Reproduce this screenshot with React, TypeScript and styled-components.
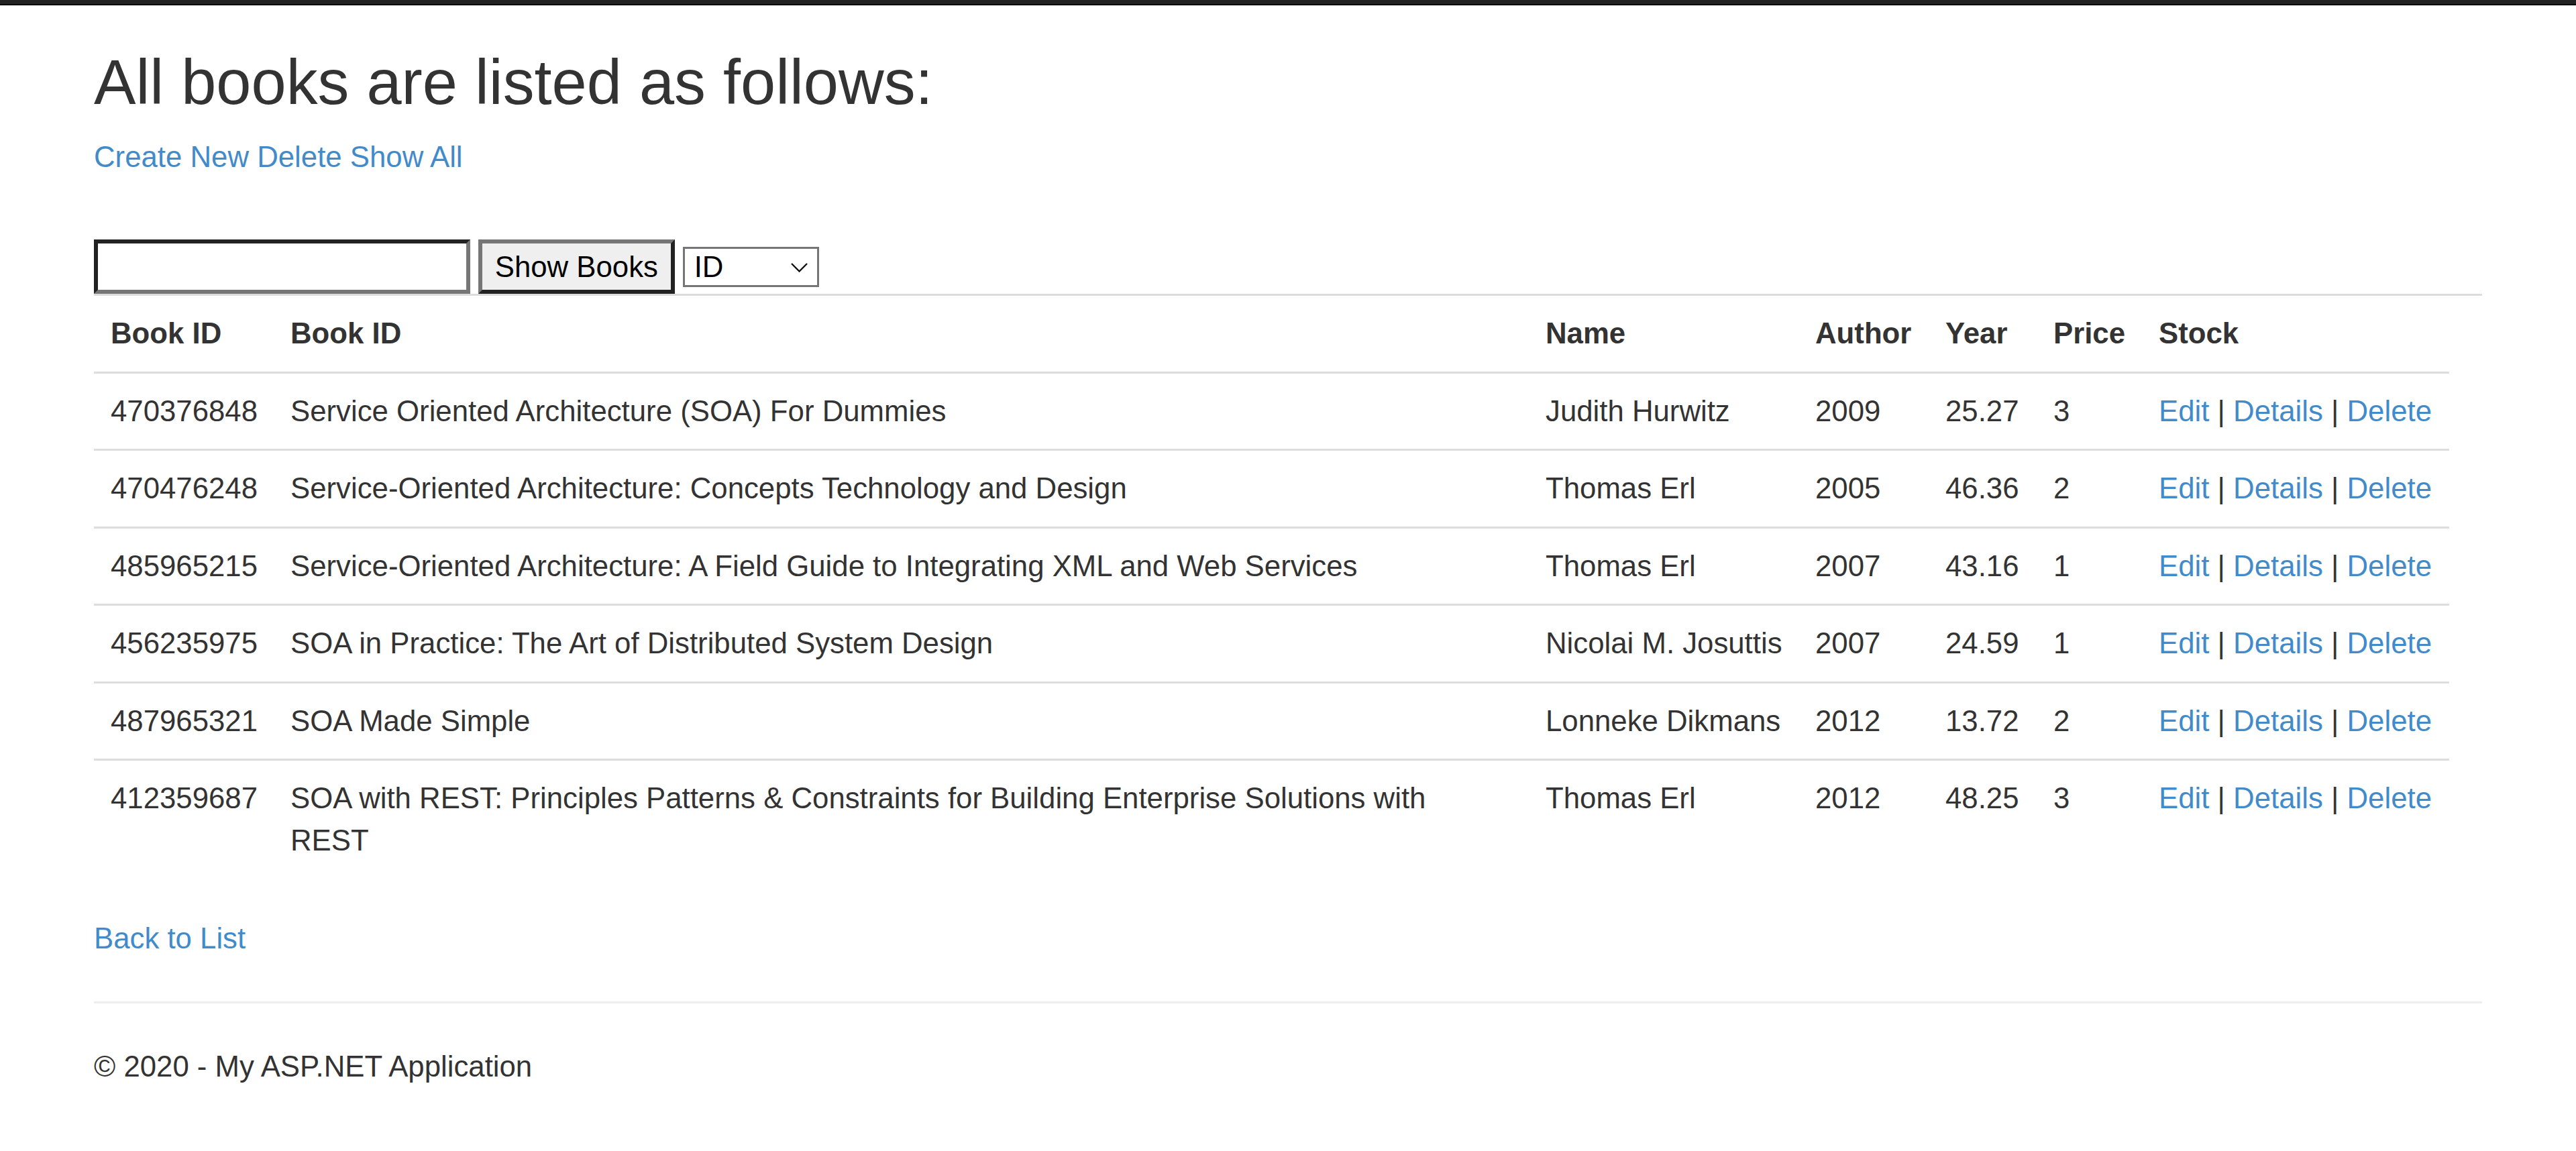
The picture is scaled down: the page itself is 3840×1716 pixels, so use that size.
import styled, { createGlobalStyle } from "styled-components";

// page was captured at 3.125x, so every bootstrap px value goes through u()
const u = (n: number) => `${n * 3.125}px`;

const GlobalStyle = createGlobalStyle`
  html, body {
    margin: 0;
    padding: 0;
    background: #fff;
  }
  body {
    font-family: "Liberation Sans", Arial, Helvetica, sans-serif;
    font-size: ${u(14)};
    line-height: ${u(20)};
    color: #333;
  }
  * {
    box-sizing: border-box;
  }
`;

const TopBar = styled.div`
  height: 8px;
  background: #222;
  border-bottom: 2px solid #080808;
`;

const Container = styled.div`
  padding: 0 140px;
`;

const Title = styled.h2`
  margin: ${u(20)} 0 29px;
  font-size: ${u(30)};
  line-height: 1.1;
  font-weight: 400;
  color: #333;
`;

const Actions = styled.p`
  margin: 0 0 92px;
  white-space: nowrap;
`;

const Link = styled.a`
  color: #428bca;
  text-decoration: none;
  cursor: pointer;
`;

const SearchForm = styled.form`
  display: flex;
  align-items: center;
  gap: 12px;
  height: ${u(26)};
`;

const SearchInput = styled.input`
  width: 561px;
  height: ${u(26)};
  padding: ${u(1)} ${u(2)};
  border-style: solid;
  border-width: ${u(2)};
  border-color: #222 #767676 #767676 #222;
  background: #fff;
  font: inherit;
  color: #000;
  outline: none;
`;

const SubmitButton = styled.button`
  height: ${u(26)};
  padding: ${u(1)} ${u(6)};
  border-style: solid;
  border-width: ${u(2)};
  border-color: #767676 #222 #222 #767676;
  background: #efefef;
  font: inherit;
  color: #000;
  white-space: nowrap;
`;

const SelectWrap = styled.div`
  position: relative;
  display: flex;
`;

const Select = styled.select`
  appearance: none;
  width: 203px;
  height: 60px;
  padding: 0 0 0 14px;
  border: ${u(1)} solid #767676;
  border-radius: 0;
  background: #fff;
  font-family: inherit;
  font-size: ${u(14)};
  line-height: 54px;
  color: #000;
  outline: none;
`;

const Chevron = styled.svg`
  position: absolute;
  right: 17px;
  top: 24px;
  width: 25px;
  height: 14px;
  pointer-events: none;
`;

const BooksTable = styled.table`
  width: 100%;
  table-layout: fixed;
  border-collapse: collapse;
  border-spacing: 0;
  margin-bottom: 59px;
`;

const HeadCell = styled.th`
  padding: ${u(8)};
  border-top: ${u(1)} solid #ddd;
  text-align: left;
  vertical-align: top;
  font-weight: 700;
  white-space: nowrap;
`;

const Cell = styled.td<{ $wrap?: boolean }>`
  padding: ${u(8)};
  padding-right: ${(p) => (p.$wrap ? "40px" : u(8))};
  border-top: ${u(1)} solid #ddd;
  text-align: left;
  vertical-align: top;
  white-space: ${(p) => (p.$wrap ? "normal" : "nowrap")};
`;

const BackLine = styled.p`
  margin: 0;
`;

const Rule = styled.hr`
  margin: ${u(20)} 0;
  border: 0;
  border-top: ${u(1)} solid #eee;
`;

const Footer = styled.footer`
  p {
    margin: 0 0 ${u(10)};
  }
`;

type Book = {
  id: string;
  title: string;
  author: string;
  year: number;
  price: string;
  stock: number;
};

const books: Book[] = [
  { id: "470376848", title: "Service Oriented Architecture (SOA) For Dummies", author: "Judith Hurwitz", year: 2009, price: "25.27", stock: 3 },
  { id: "470476248", title: "Service-Oriented Architecture: Concepts Technology and Design", author: "Thomas Erl", year: 2005, price: "46.36", stock: 2 },
  { id: "485965215", title: "Service-Oriented Architecture: A Field Guide to Integrating XML and Web Services", author: "Thomas Erl", year: 2007, price: "43.16", stock: 1 },
  { id: "456235975", title: "SOA in Practice: The Art of Distributed System Design", author: "Nicolai M. Josuttis", year: 2007, price: "24.59", stock: 1 },
  { id: "487965321", title: "SOA Made Simple", author: "Lonneke Dikmans", year: 2012, price: "13.72", stock: 2 },
  { id: "412359687", title: "SOA with REST: Principles Patterns & Constraints for Building Enterprise Solutions with REST", author: "Thomas Erl", year: 2012, price: "48.25", stock: 3 },
];

const headers = ["Book ID", "Book ID", "Name", "Author", "Year", "Price", "Stock", ""];

function App() {
  return (
    <>
      <GlobalStyle />
      <TopBar />
      <Container>
        <Title>All books are listed as follows:</Title>
        <Actions>
          <Link>Create New</Link> <Link>Delete</Link> <Link>Show All</Link>
        </Actions>

        <SearchForm onSubmit={(e) => e.preventDefault()}>
          <SearchInput type="text" />
          <SubmitButton type="submit">Show Books</SubmitButton>
          <SelectWrap>
            <Select defaultValue="ID">
              <option value="ID">ID</option>
              <option value="Name">Name</option>
              <option value="Author">Author</option>
            </Select>
            <Chevron viewBox="0 0 25 14">
              <polyline points="1,1 12.5,12.5 24,1" fill="none" stroke="#111" strokeWidth="2.4" />
            </Chevron>
          </SelectWrap>
        </SearchForm>

        <BooksTable>
          <colgroup>
            <col style={{ width: 268 }} />
            <col />
            <col style={{ width: 402 }} />
            <col style={{ width: 194 }} />
            <col style={{ width: 161 }} />
            <col style={{ width: 157 }} />
            <col style={{ width: 458 }} />
            <col style={{ width: 49 }} />
          </colgroup>
          <tbody>
            <tr>
              {headers.map((h, i) => (
                <HeadCell key={i}>{h}</HeadCell>
              ))}
            </tr>
            {books.map((b) => (
              <tr key={b.id}>
                <Cell>{b.id}</Cell>
                <Cell $wrap>{b.title}</Cell>
                <Cell>{b.author}</Cell>
                <Cell>{b.year}</Cell>
                <Cell>{b.price}</Cell>
                <Cell>{b.stock}</Cell>
                <Cell>
                  <Link>Edit</Link> | <Link>Details</Link> | <Link>Delete</Link>
                </Cell>
              </tr>
            ))}
          </tbody>
        </BooksTable>

        <BackLine>
          <Link>Back to List</Link>
        </BackLine>
        <Rule />
        <Footer>
          <p>© 2020 - My ASP.NET Application</p>
        </Footer>
      </Container>
    </>
  );
}

export default App;
